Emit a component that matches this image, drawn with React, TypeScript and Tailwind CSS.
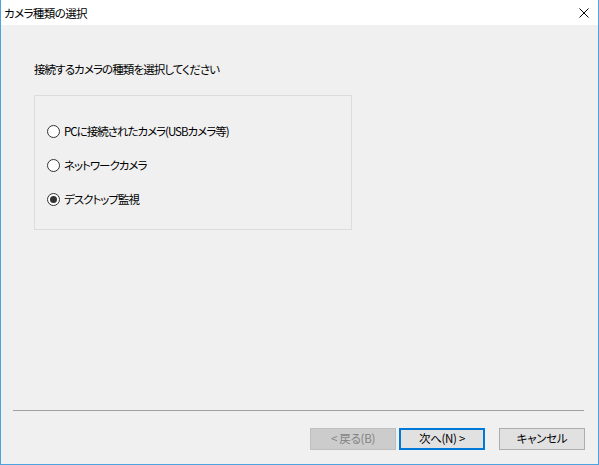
import React from "react";

function Radio({ checked, label }: { checked?: boolean; label: string }) {
  return (
    <div className="flex items-center h-[16px]">
      <span className="w-[13px] h-[13px] rounded-full border border-[#333333] bg-white flex items-center justify-center">
        {checked && <span className="w-[7px] h-[7px] rounded-full bg-[#333333]" />}
      </span>
      <span className="ml-[4px] text-[11.5px] leading-[16px] tracking-[-1px] text-black">{label}</span>
    </div>
  );
}

export default function App() {
  return (
    <div className="w-[599px] h-[465px] flex flex-col border-x border-b border-[#4ca3e0] font-['Noto_Sans_CJK_JP',sans-serif] [font-feature-settings:'palt'] text-black">
      <div className="h-[25px] bg-white flex items-center justify-between pl-[3px] pr-[9px]">
        <span className="text-[11.5px] leading-[16px] tracking-[-0.6px]">カメラ種類の選択</span>
        <svg width="10" height="10" viewBox="0 0 10 10">
          <path d="M0.5 0.5 L9.5 9.5 M9.5 0.5 L0.5 9.5" stroke="#000" strokeWidth="1" />
        </svg>
      </div>
      <div className="flex-1 bg-[#f0f0f0] flex flex-col">
        <div className="mt-[36px] ml-[33px] text-[11.5px] leading-[16px] tracking-[-0.9px]">接続するカメラの種類を選択してください</div>
        <div className="mt-[18px] ml-[33px] w-[318px] h-[135px] border border-[#dcdcdc] pt-[27px] pl-[12px] flex flex-col gap-[18px]">
          <Radio label="PCに接続されたカメラ(USBカメラ等)" />
          <Radio label="ネットワークカメラ" />
          <Radio checked label="デスクトップ監視" />
        </div>
        <div className="mt-auto">
          <div className="ml-[12px] mr-[14px] h-[1px] bg-[#a0a0a0]" />
          <div className="mt-[17px] mb-[14px] pr-[13px] flex justify-end text-[11.5px] tracking-[-0.3px]">
            <div className="w-[86px] h-[22px] bg-[#cccccc] border border-[#bfbfbf] flex items-center justify-center text-[#838383] whitespace-pre">{"< 戻る(B)"}</div>
            <div className="ml-[3px] w-[86px] h-[22px] bg-[#e1e1e1] border-2 border-[#0078d7] flex items-center justify-center whitespace-pre">{"次へ(N) >"}</div>
            <div className="ml-[14px] w-[86px] h-[22px] bg-[#e1e1e1] border border-[#adadad] flex items-center justify-center">キャンセル</div>
          </div>
        </div>
      </div>
    </div>
  );
}
